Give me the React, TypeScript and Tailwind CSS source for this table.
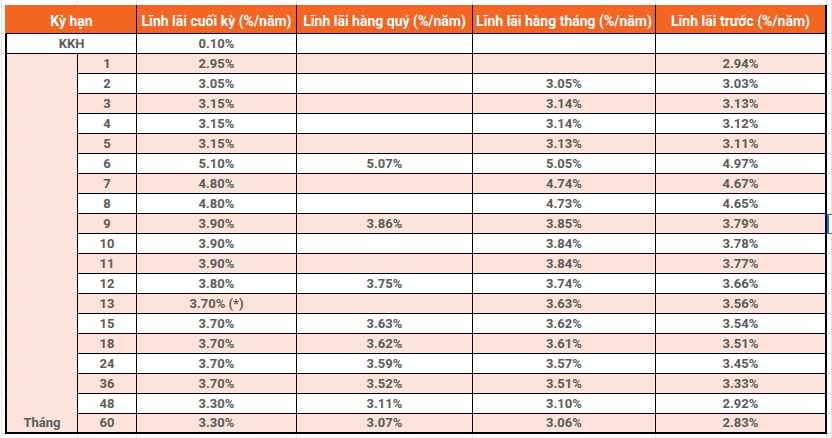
import React from 'react';

const ORANGE = 'bg-[#f26522]';

const rows: string[][] = [
  ['1', '2.95%', '', '', '2.94%'],
  ['2', '3.05%', '', '3.05%', '3.03%'],
  ['3', '3.15%', '', '3.14%', '3.13%'],
  ['4', '3.15%', '', '3.14%', '3.12%'],
  ['5', '3.15%', '', '3.13%', '3.11%'],
  ['6', '5.10%', '5.07%', '5.05%', '4.97%'],
  ['7', '4.80%', '', '4.74%', '4.67%'],
  ['8', '4.80%', '', '4.73%', '4.65%'],
  ['9', '3.90%', '3.86%', '3.85%', '3.79%'],
  ['10', '3.90%', '', '3.84%', '3.78%'],
  ['11', '3.90%', '', '3.84%', '3.77%'],
  ['12', '3.80%', '3.75%', '3.74%', '3.66%'],
  ['13', '3.70% (*)', '', '3.63%', '3.56%'],
  ['15', '3.70%', '3.63%', '3.62%', '3.54%'],
  ['18', '3.70%', '3.62%', '3.61%', '3.51%'],
  ['24', '3.70%', '3.59%', '3.57%', '3.45%'],
  ['36', '3.70%', '3.52%', '3.51%', '3.33%'],
  ['48', '3.30%', '3.11%', '3.10%', '2.92%'],
  ['60', '3.30%', '3.07%', '3.06%', '2.83%'],
];

const headers = [
  'Lĩnh lãi cuối kỳ (%/năm)',
  'Lĩnh lãi hàng quý (%/năm)',
  'Lĩnh lãi hàng tháng (%/năm)',
  'Lĩnh lãi trước (%/năm)',
];

// spreadsheet gridline pieces outside the table
const gutterLeft = 'ml-px border-l border-b border-[#e2e3e3]';
const gutterRight = 'border-r border-b border-[#e2e3e3]';
const gutterCol = 'border-r border-[#e2e3e3]';

const App: React.FC = () => {
  const last = rows.length - 1;

  return (
    <div className="w-[832px] h-[438px] overflow-hidden bg-white font-['Roboto','Liberation_Sans',sans-serif]">
      <div className="grid grid-cols-[5px_73px_59px_160px_176px_183px_171px_5px] grid-rows-[5px_29px_repeat(20,20px)_4px]">
        {/* top gutter */}
        <div className="ml-px border-l border-[#e2e3e3]" />
        {[0, 1, 2, 3, 4, 5, 6].map((i) => (
          <div key={`t${i}`} className={gutterCol} />
        ))}

        {/* header */}
        <div className={gutterLeft} />
        <div className={`col-span-2 flex items-end justify-center border-l-2 border-l-transparent border-r border-b border-black ${ORANGE} pb-[3px] text-[14px] font-bold leading-[17px] text-white`}>
          Kỳ hạn
        </div>
        {headers.map((h, i) => (
          <div
            key={h}
            className={`flex items-end justify-center border-b border-black ${ORANGE} pb-[3px] text-[14px] font-bold leading-[17px] text-white whitespace-nowrap ${i === 3 ? 'border-r-2' : 'border-r'}`}
          >
            {h}
          </div>
        ))}
        <div className={gutterRight} />

        {/* KKH */}
        <div className={gutterLeft} />
        <div className="col-span-2 flex items-end justify-center border-l-2 border-r border-b border-black bg-white pb-[2px] text-[13px] font-bold leading-[15px] text-[#5b5b5b]">
          KKH
        </div>
        {['0.10%', '', '', ''].map((v, i) => (
          <div
            key={`k${i}`}
            className={`flex items-end justify-center border-b border-black bg-white pb-[2px] text-[13px] font-bold leading-[15px] text-[#5b5b5b] ${i === 3 ? 'border-r-2' : 'border-r'}`}
          >
            {v}
          </div>
        ))}
        <div className={gutterRight} />

        {/* merged "Tháng" cell */}
        <div className="col-start-2 row-start-4 row-span-19 flex items-end justify-center border-l-2 border-r border-b-2 border-black bg-[#fce4dc] pb-[2px] text-[13px] font-bold leading-[15px] text-[#5b5b5b]">
          Tháng
        </div>

        {rows.map((r, ri) => {
          const bg = ri % 2 === 0 ? 'bg-[#fce4dc]' : 'bg-white';
          const bottom = ri === last ? 'border-b-2' : 'border-b';
          return (
            <React.Fragment key={r[0]}>
              <div className={gutterLeft} />
              {r.map((v, ci) => (
                <div
                  key={ci}
                  className={`flex items-end justify-center border-black ${bg} ${bottom} ${ci === 4 ? 'border-r-2' : 'border-r'} pb-[2px] text-[13px] font-bold leading-[15px] text-[#5b5b5b]`}
                >
                  {v}
                </div>
              ))}
              {r[0] === '9' ? (
                <div className="border-l-2 border-t border-b border-[#1a73e8]" />
              ) : (
                <div className={gutterRight} />
              )}
            </React.Fragment>
          );
        })}

        {/* bottom gutter */}
        <div className="ml-px border-l border-[#e2e3e3]" />
        {[0, 1, 2, 3, 4, 5, 6].map((i) => (
          <div key={`b${i}`} className={gutterCol} />
        ))}
      </div>
    </div>
  );
};

export default App;
